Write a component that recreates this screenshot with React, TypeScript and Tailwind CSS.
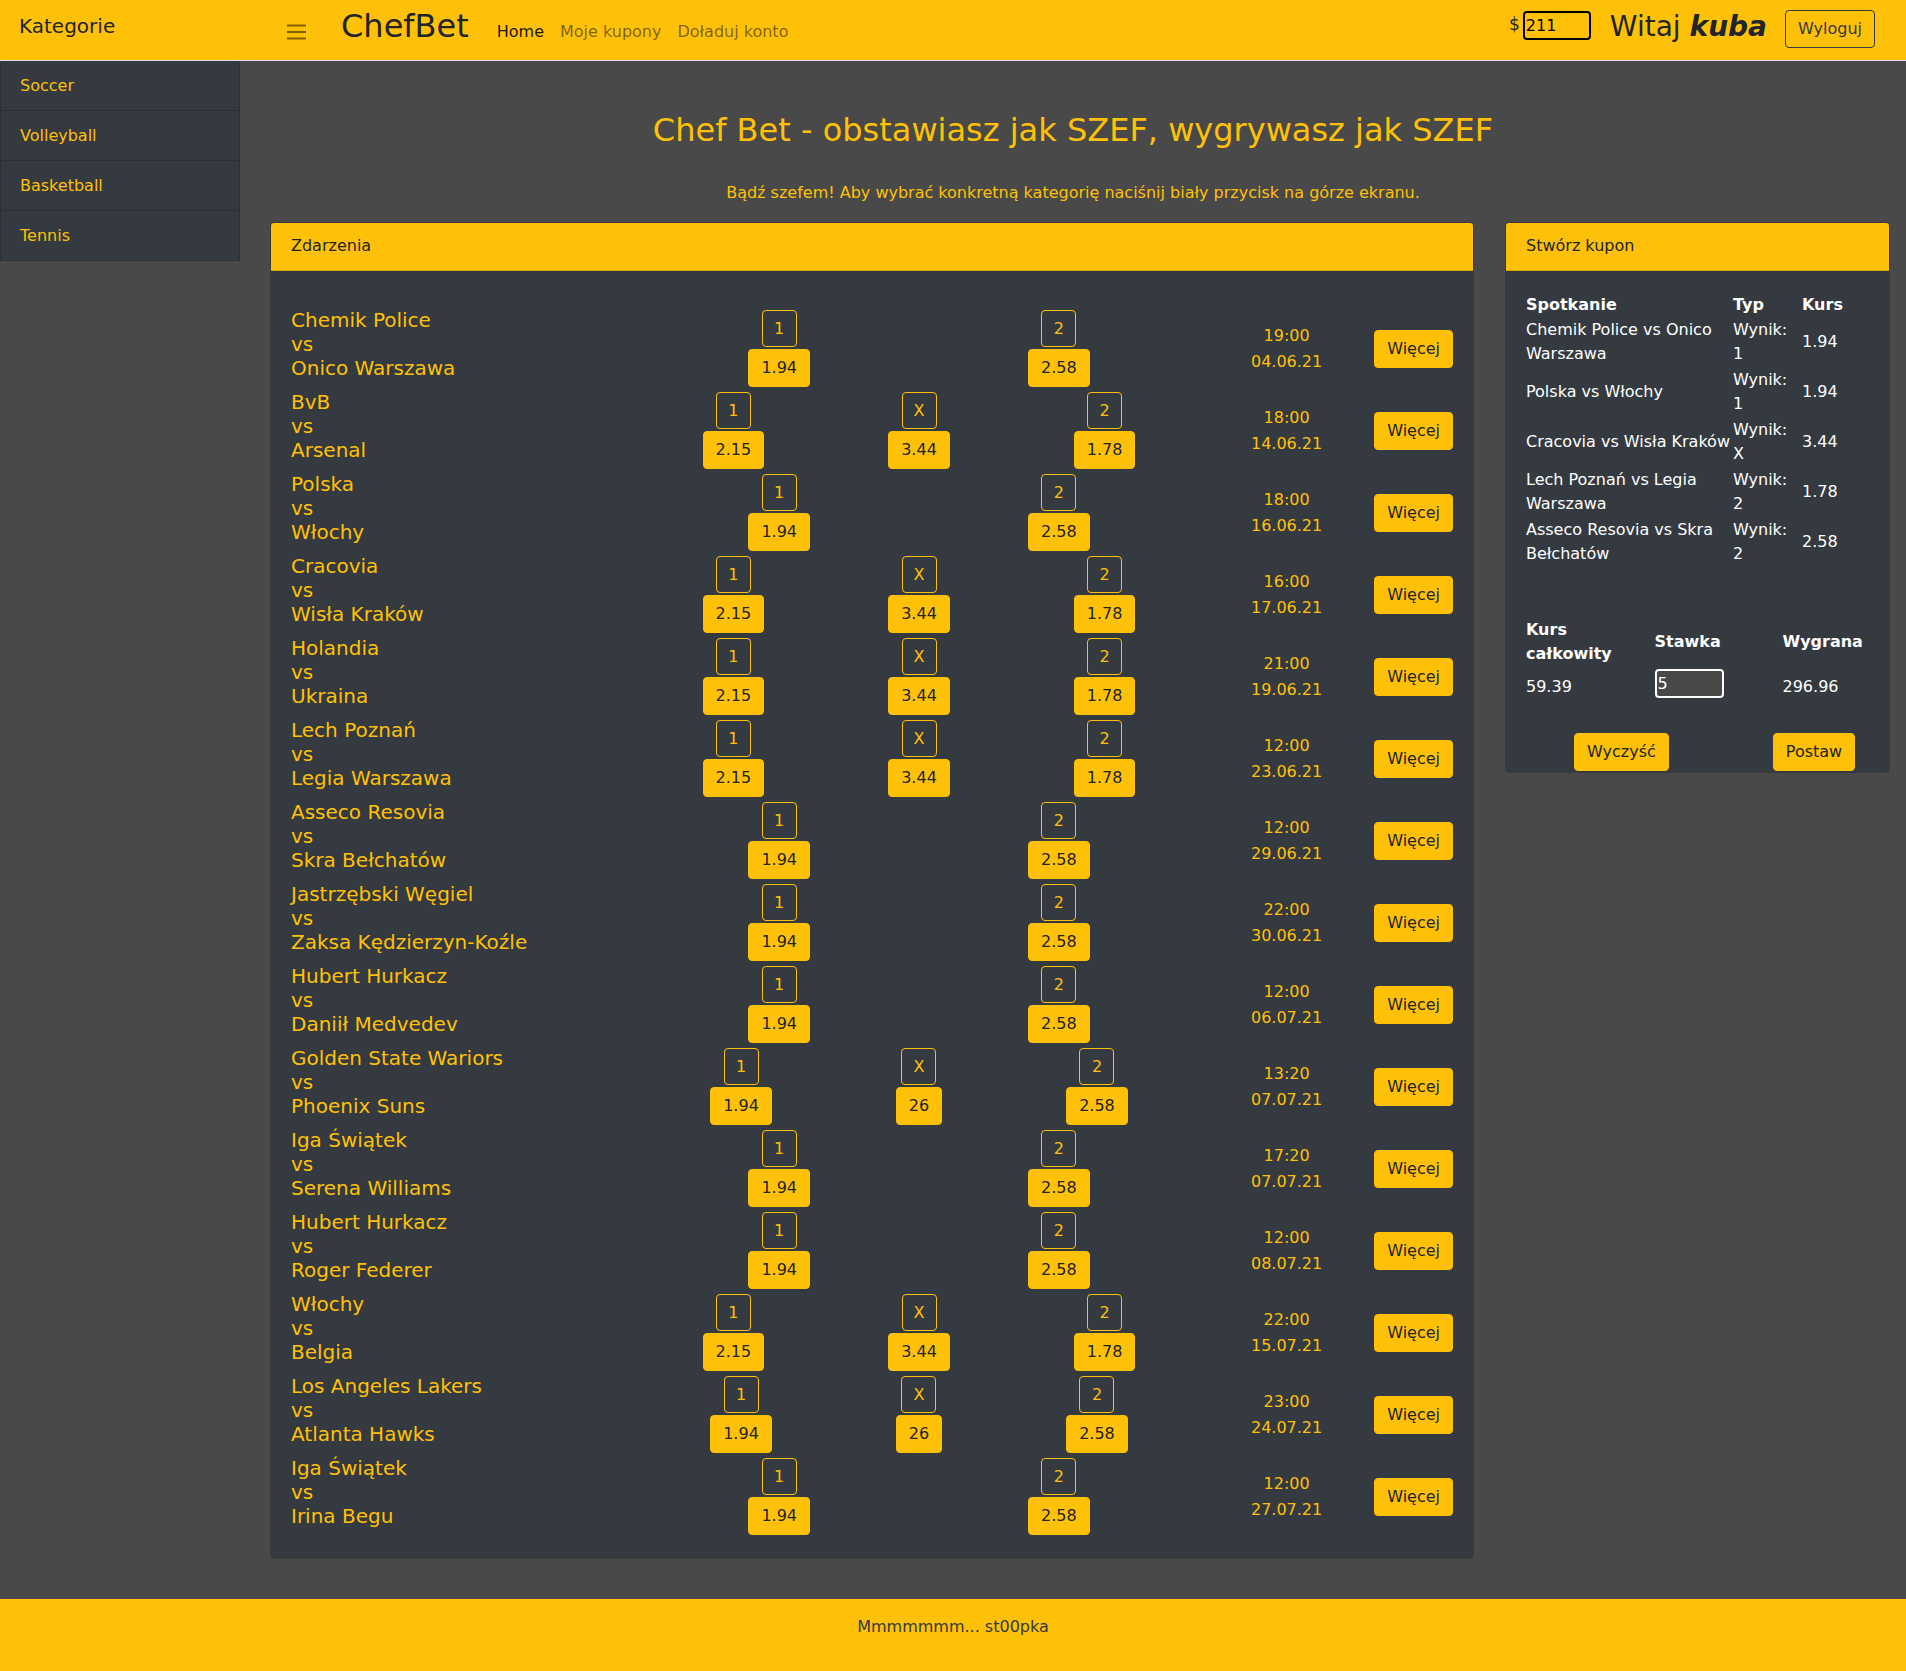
import React from 'react';

type Odd = { label: string; value: string };
type Match = { home: string; away: string; odds: Odd[]; time: string; date: string };

const two = (a: string, b: string): Odd[] => [
  { label: '1', value: a },
  { label: '2', value: b },
];
const three = (a: string, x: string, b: string): Odd[] => [
  { label: '1', value: a },
  { label: 'X', value: x },
  { label: '2', value: b },
];

const matches: Match[] = [
  { home: 'Chemik Police', away: 'Onico Warszawa', odds: two('1.94', '2.58'), time: '19:00', date: '04.06.21' },
  { home: 'BvB', away: 'Arsenal', odds: three('2.15', '3.44', '1.78'), time: '18:00', date: '14.06.21' },
  { home: 'Polska', away: 'Włochy', odds: two('1.94', '2.58'), time: '18:00', date: '16.06.21' },
  { home: 'Cracovia', away: 'Wisła Kraków', odds: three('2.15', '3.44', '1.78'), time: '16:00', date: '17.06.21' },
  { home: 'Holandia', away: 'Ukraina', odds: three('2.15', '3.44', '1.78'), time: '21:00', date: '19.06.21' },
  { home: 'Lech Poznań', away: 'Legia Warszawa', odds: three('2.15', '3.44', '1.78'), time: '12:00', date: '23.06.21' },
  { home: 'Asseco Resovia', away: 'Skra Bełchatów', odds: two('1.94', '2.58'), time: '12:00', date: '29.06.21' },
  { home: 'Jastrzębski Węgiel', away: 'Zaksa Kędzierzyn-Koźle', odds: two('1.94', '2.58'), time: '22:00', date: '30.06.21' },
  { home: 'Hubert Hurkacz', away: 'Daniił Medvedev', odds: two('1.94', '2.58'), time: '12:00', date: '06.07.21' },
  { home: 'Golden State Wariors', away: 'Phoenix Suns', odds: three('1.94', '26', '2.58'), time: '13:20', date: '07.07.21' },
  { home: 'Iga Świątek', away: 'Serena Williams', odds: two('1.94', '2.58'), time: '17:20', date: '07.07.21' },
  { home: 'Hubert Hurkacz', away: 'Roger Federer', odds: two('1.94', '2.58'), time: '12:00', date: '08.07.21' },
  { home: 'Włochy', away: 'Belgia', odds: three('2.15', '3.44', '1.78'), time: '22:00', date: '15.07.21' },
  { home: 'Los Angeles Lakers', away: 'Atlanta Hawks', odds: three('1.94', '26', '2.58'), time: '23:00', date: '24.07.21' },
  { home: 'Iga Świątek', away: 'Irina Begu', odds: two('1.94', '2.58'), time: '12:00', date: '27.07.21' },
];

const coupon = [
  { match: 'Chemik Police vs Onico Warszawa', type: '1', odd: '1.94' },
  { match: 'Polska vs Włochy', type: '1', odd: '1.94' },
  { match: 'Cracovia vs Wisła Kraków', type: 'X', odd: '3.44' },
  { match: 'Lech Poznań vs Legia Warszawa', type: '2', odd: '1.78' },
  { match: 'Asseco Resovia vs Skra Bełchatów', type: '2', odd: '2.58' },
];

const categories = ['Soccer', 'Volleyball', 'Basketball', 'Tennis'];

function MatchRow({ m }: { m: Match }) {
  return (
    <div className="grid grid-cols-[348px_560px_1fr_auto] items-center h-[82px]">
      {/* team names */}
      <div className="self-start text-[20px] leading-6 text-[#ffc107]">
        <div>{m.home}</div>
        <div>vs</div>
        <div>{m.away}</div>
      </div>

      {/* odds */}
      <div className={m.odds.length === 3 ? 'flex justify-center gap-[124px]' : 'flex justify-center gap-[218px]'}>
        {m.odds.map((o) => (
          <div key={o.label} className="flex flex-col items-center gap-[2px]">
            <div className="w-[35px] h-[37px] flex items-center justify-center border border-[#ffc107] rounded text-[#ffc107]">
              {o.label}
            </div>
            <div className="h-[38px] px-3 flex items-center border border-[#ffc107] bg-[#ffc107] rounded text-[#212529]">
              {o.value}
            </div>
          </div>
        ))}
      </div>

      {/* time */}
      <div className="text-center text-[#ffc107] leading-[26px]">
        <div>{m.time}</div>
        <div>{m.date}</div>
      </div>

      <button className="h-[38px] px-3 bg-[#ffc107] border border-[#ffc107] rounded text-[#212529] leading-6">
        Więcej
      </button>
    </div>
  );
}

export default function App() {
  return (
    <div className="bg-[#494949] font-['DejaVu_Sans','Liberation_Sans',sans-serif] text-base">
      {/* top bar */}
      <header className="flex h-[61px] bg-[#ffc107] border-b border-[#dedede]">
        <div className="w-[240px] shrink-0 pl-[19px] pt-[11px] text-[20px] leading-[30px] text-[#212529]">
          Kategorie
        </div>
        <div className="flex flex-1 items-start pr-[31px]">
          <svg className="mt-[24px] ml-[47px]" width="19" height="16" viewBox="0 0 19 16">
            <path d="M0 1.5h19M0 8h19M0 14.5h19" stroke="rgba(0,0,0,0.5)" strokeWidth="2" />
          </svg>
          <span className="ml-[35px] mt-[6px] text-[32px] leading-[40px] text-[#212529]">ChefBet</span>
          <nav className="flex gap-4 ml-[28px] mt-[20px] leading-6">
            <a className="text-black/90" href="#">Home</a>
            <a className="text-black/50" href="#">Moje kupony</a>
            <a className="text-black/50" href="#">Doładuj konto</a>
          </nav>

          <div className="ml-auto flex items-start">
            <span className="mt-[12px] text-[17px] leading-6 text-[#212529]">$</span>
            <input
              className="ml-[3px] mt-[11px] w-[68px] h-[29px] pl-[1px] border-2 border-black rounded bg-transparent text-black outline-none"
              defaultValue="211"
            />
            <span className="ml-[19px] mt-[10px] text-[28px] leading-[34px] text-[#212529]">
              Witaj <b className="italic">kuba</b>
            </span>
            <button className="ml-[18px] mt-[10px] h-[38px] px-3 border border-[#343a40] rounded text-[#343a40] leading-6">
              Wyloguj
            </button>
          </div>
        </div>
      </header>

      <div className="flex">
        {/* categories */}
        <aside className="w-[240px] shrink-0 self-start border-x border-[#2b3035]">
          {categories.map((c) => (
            <div key={c} className="h-[50px] pl-[19px] pt-[1px] flex items-center bg-[#343a40] border-b border-[#2b3035] text-[#ffc107]">
              {c}
            </div>
          ))}
        </aside>

        <main className="flex-1 pb-[40px]">
          <h2 className="mt-[50px] text-center text-[32px] leading-[38.4px] text-[#ffc107]">
            Chef Bet - obstawiasz jak SZEF, wygrywasz jak SZEF
          </h2>
          <p className="mt-[32px] text-center leading-6 text-[#ffc107]">
            Bądź szefem! Aby wybrać konkretną kategorię naciśnij biały przycisk na górze ekranu.
          </p>

          <div className="mt-[16.5px] pl-[30px] pr-[16px] flex items-start">
            {/* events */}
            <div className="flex-1 rounded border border-black/20 overflow-hidden">
              <div className="h-[48px] px-5 flex items-center bg-[#ffc107] border-b border-black/15 text-[#212529]">
                Zdarzenia
              </div>
              <div className="bg-[#343a40] px-5 pt-[37px] pb-5">
                {matches.map((m, i) => (
                  <MatchRow key={i} m={m} />
                ))}
              </div>
            </div>

            {/* coupon */}
            <div className="w-[385px] ml-[31px] rounded border border-black/20 overflow-hidden">
              <div className="h-[48px] px-5 flex items-center bg-[#ffc107] border-b border-black/15 text-[#212529]">
                Stwórz kupon
              </div>
              <div className="bg-[#343a40] px-5 pt-[22px] pb-[1px] text-white">
                <div className="grid grid-cols-[207px_69px_1fr] h-6 leading-6 font-bold">
                  <div>Spotkanie</div>
                  <div>Typ</div>
                  <div>Kurs</div>
                </div>
                {coupon.map((c) => (
                  <div key={c.match} className="grid grid-cols-[207px_69px_1fr] items-center h-[50px] leading-6">
                    <div>{c.match}</div>
                    <div>
                      <div>Wynik:</div>
                      <div>{c.type}</div>
                    </div>
                    <div>{c.odd}</div>
                  </div>
                ))}

                <div className="mt-[51px] grid grid-cols-[128.5px_128px_1fr] items-center h-[48px] leading-6 font-bold">
                  <div>
                    <div>Kurs</div>
                    <div>całkowity</div>
                  </div>
                  <div>Stawka</div>
                  <div>Wygrana</div>
                </div>
                <div className="grid grid-cols-[128.5px_128px_1fr] items-start h-[35px] leading-6">
                  <div className="pt-[9px]">59.39</div>
                  <div className="pt-[3px]">
                    <input
                      className="w-[69px] h-[29px] pl-[1px] border-2 border-white rounded bg-[#494949] text-white outline-none"
                      defaultValue="5"
                    />
                  </div>
                  <div className="pt-[9px]">296.96</div>
                </div>

                <div className="mt-[32px] flex">
                  <button className="ml-[48px] h-[38px] px-3 bg-[#ffc107] border border-[#ffc107] rounded text-[#212529] leading-6">
                    Wyczyść
                  </button>
                  <button className="ml-[104px] h-[38px] px-3 bg-[#ffc107] border border-[#ffc107] rounded text-[#212529] leading-6">
                    Postaw
                  </button>
                </div>
              </div>
            </div>
          </div>
        </main>
      </div>

      <footer className="h-[72px] pt-[16px] bg-[#ffc107] text-center leading-6 text-[#343a40]">
        Mmmmmmm... st00pka
      </footer>
    </div>
  );
}
